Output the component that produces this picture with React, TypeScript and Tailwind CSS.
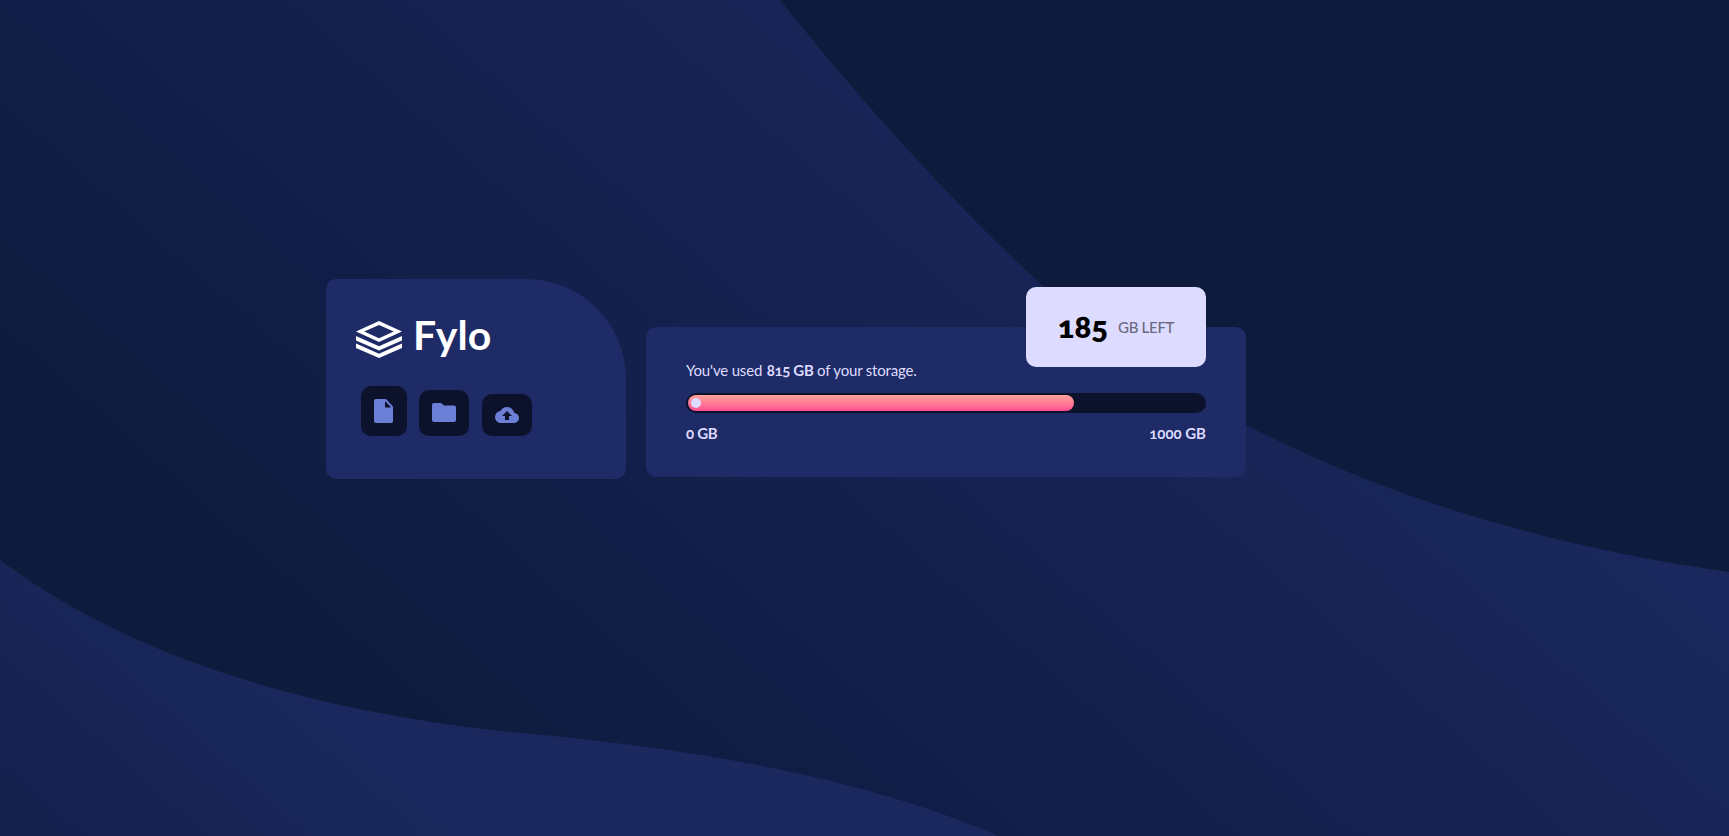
import React from "react";

function Background() {
  return (
    <svg className="absolute inset-0 -z-10 h-full w-full" viewBox="0 0 1729 836" preserveAspectRatio="none" aria-hidden="true">
      <defs>
        <linearGradient id="band" gradientUnits="userSpaceOnUse" x1="-211" y1="240" x2="462" y2="-525">
          <stop offset="0" stopColor="#0e1b3c" />
          <stop offset="0.31" stopColor="#121d47" />
          <stop offset="0.56" stopColor="#15214e" />
          <stop offset="0.84" stopColor="#182557" />
          <stop offset="1" stopColor="#1b285e" />
        </linearGradient>
        <linearGradient id="hill" gradientUnits="userSpaceOnUse" x1="-462" y1="525" x2="-198" y2="225">
          <stop offset="0" stopColor="#13204c" />
          <stop offset="0.3" stopColor="#15214e" />
          <stop offset="0.7" stopColor="#182557" />
          <stop offset="1" stopColor="#1b285e" />
        </linearGradient>
      </defs>
      <rect width="1729" height="836" fill="#0e1b3c" />
      <path d="M0 0H780C864 105 955 205 1043 286C1105 338 1175 386 1246 425C1385 497 1550 547 1729 572V836H0Z" fill="url(#band)" />
      <path d="M0 560C120 650 290 708 500 731C665 745 852 772 998 836H0Z" fill="url(#hill)" />
    </svg>
  );
}

function Logo() {
  return (
    <div className="flex h-[42px] items-start">
      <svg className="mt-[4px] h-[37px] w-[46px]" viewBox="0 0 46 37" fill="#fff">
        <path fillRule="evenodd" d="M23 0L46 10.5L23 21L0 10.5ZM23 3.9L8.3 10.5L23 17.2L37.7 10.5Z" />
        <path d="M0 15L23 25.3L46 15V19.4L23 29.6L0 19.4Z" />
        <path d="M0 22.6L23 32.8L46 22.6V27L23 37L0 27Z" />
      </svg>
      <span className="-mt-[2px] ml-[11px] font-['Lato'] text-[41px] leading-[40px] font-bold tracking-[0.1px] text-white">Fylo</span>
    </div>
  );
}

function Actions() {
  const base = "flex items-center justify-center rounded-[10px] bg-[#0c122c] p-[13px]";
  return (
    <div className="flex items-end gap-3 pl-[5px]">
      <button className={base} aria-label="Documents">
        <svg className="h-6 w-5" viewBox="0 0 20 24" fill="#6b7fd7"><path d="M2 0H12L19 7.5V22Q19 24 17 24H2Q0 24 0 22V2Q0 0 2 0Z" /><path d="M11 2V8.5H17.2Z" fill="#0c122c" /></svg>
      </button>
      <button className={base} aria-label="Folders">
        <svg className="h-5 w-6" viewBox="0 0 24 20" fill="#6b7fd7"><path d="M2 0H9L12 2.4H22Q24 2.4 24 4.4V17Q24 19 22 19H2Q0 19 0 17V2Q0 0 2 0Z" /></svg>
      </button>
      <button className={base + " ml-px"} aria-label="Upload">
        <svg className="h-4 w-6" viewBox="0 0 24 16" fill="#6b7fd7"><path d="M19.35 6.04A7.49 7.49 0 0 0 12 0C9.11 0 6.6 1.64 5.35 4.04A5.994 5.994 0 0 0 0 10c0 3.31 2.69 6 6 6h13c2.76 0 5-2.24 5-5 0-2.64-2.05-4.78-4.65-4.96zM14 9v4h-4V9H7l5-5 5 5h-3z" /></svg>
      </button>
    </div>
  );
}

export default function App() {
  return (
    <main className="relative isolate flex h-[836px] w-full items-end gap-5 overflow-hidden pb-[357px] pl-[326px] font-['Lato',sans-serif] [font-feature-settings:'onum']">
      <Background />
      <section className="flex h-[200px] w-[300px] flex-col gap-[27px] rounded-[10px] rounded-tr-[100px] bg-[#1e2b66] pt-[38px] pl-[30px]">
        <Logo />
        <Actions />
      </section>
      <section className="relative mb-[2px] h-[150px] w-[600px] rounded-[10px] bg-[#1e2b66] px-10 pt-[33px] text-[15px] leading-5 text-[#dddbff]">
        <p className="tracking-[-0.18px]"><span>You've used </span><b className="ml-px tracking-[-0.35px]">815 GB</b><span> of your storage.</span></p>
        <div className="mt-[13px] h-5 rounded-full bg-[#0c122c] p-[2px]">
          <div className="flex h-4 w-[386px] items-center rounded-full bg-linear-to-b from-[#ffa399] to-[#ff4c93] pl-[3px]">
            <div className="size-[10px] rounded-full bg-[#dddbff]" />
          </div>
        </div>
        <div className="mt-[10px] flex justify-between font-bold"><span className="tracking-[-0.3px]">0 GB</span><span>1000 GB</span></div>
        <div className="absolute -top-10 right-10 flex h-20 w-[180px] items-center justify-center gap-[10px] rounded-[10px] bg-[#dddbff]">
          <span className="-mt-[3px] text-[31px] font-extrabold text-black">185</span>
          <span className="-mt-px text-[15px] font-medium tracking-[-0.3px] text-[#6b6a80]">GB LEFT</span>
        </div>
      </section>
    </main>
  );
}
